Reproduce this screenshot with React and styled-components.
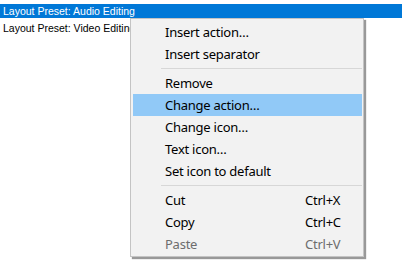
import styled, { createGlobalStyle } from 'styled-components';

const GlobalStyle = createGlobalStyle`
    html, body {
        margin: 0;
        padding: 0;
        background: #ffffff;
    }
    body {
        width: 402px;
        height: 270px;
        overflow: hidden;
    }
`;

const presets = ['Layout Preset: Audio Editing', 'Layout Preset: Video Editing'];

const menu = [
    { label: 'Insert action…' },
    { label: 'Insert separator' },
    { separator: true },
    { label: 'Remove' },
    { label: 'Change action…', hover: true },
    { label: 'Change icon…' },
    { label: 'Text icon…' },
    { label: 'Set icon to default' },
    { separator: true },
    { label: 'Cut', shortcut: 'Ctrl+X' },
    { label: 'Copy', shortcut: 'Ctrl+C' },
    { label: 'Paste', shortcut: 'Ctrl+V', disabled: true },
];

export default function App() {
    return (
        <>
            <GlobalStyle />
            <Screen>
                <PresetList>
                    {presets.map((name, i) => (
                        <PresetRow key={name} $selected={i === 0}>{name}</PresetRow>
                    ))}
                </PresetList>
                <ContextMenu>
                    {menu.map((item, i) =>
                        item.separator ? (
                            <Separator key={i} />
                        ) : (
                            <MenuItem key={i} $hover={item.hover} $disabled={item.disabled}>
                                <Label>{item.label}</Label>
                                {item.shortcut && <Shortcut>{item.shortcut}</Shortcut>}
                            </MenuItem>
                        )
                    )}
                </ContextMenu>
            </Screen>
        </>
    );
}

const Screen = styled.div`
    position: relative;
    width: 402px;
    height: 270px;
    background: #ffffff;
`;

const PresetList = styled.div`
    display: flex;
    flex-direction: column;
    gap: 3px;
    padding-top: 4px;
`;

const PresetRow = styled.div`
    height: 14px;
    line-height: 14px;
    padding-left: 3px;
    font-family: 'Liberation Sans', Arial, sans-serif;
    font-size: 10.5px;
    color: ${p => (p.$selected ? '#ffffff' : '#000000')};
    background: ${p => (p.$selected ? '#0078d7' : 'transparent')};
    white-space: nowrap;
`;

const ContextMenu = styled.div`
    position: absolute;
    left: 130px;
    top: 18px;
    width: 229px;
    padding: 2px 1px 1px 2px;
    background: #f2f2f2;
    border: 1px solid #c4c4c4;
    box-shadow: 2px 2px 1px rgba(0, 0, 0, 0.4);
    font-family: 'Noto Sans', 'Open Sans', sans-serif;
    font-size: 13px;
    letter-spacing: -0.25px;
`;

const MenuItem = styled.div`
    display: flex;
    align-items: center;
    height: 22px;
    padding-left: 32px;
    color: ${p => (p.$disabled ? '#6d6d6d' : '#000000')};
    background: ${p => (p.$hover ? '#91c9f7' : 'transparent')};
`;

const Label = styled.span`
    width: 140px;
    white-space: nowrap;
`;

const Shortcut = styled.span`
    white-space: nowrap;
`;

const Separator = styled.div`
    height: 1px;
    margin: 3px 0 3px 28px;
    background: #d7d7d7;
`;
